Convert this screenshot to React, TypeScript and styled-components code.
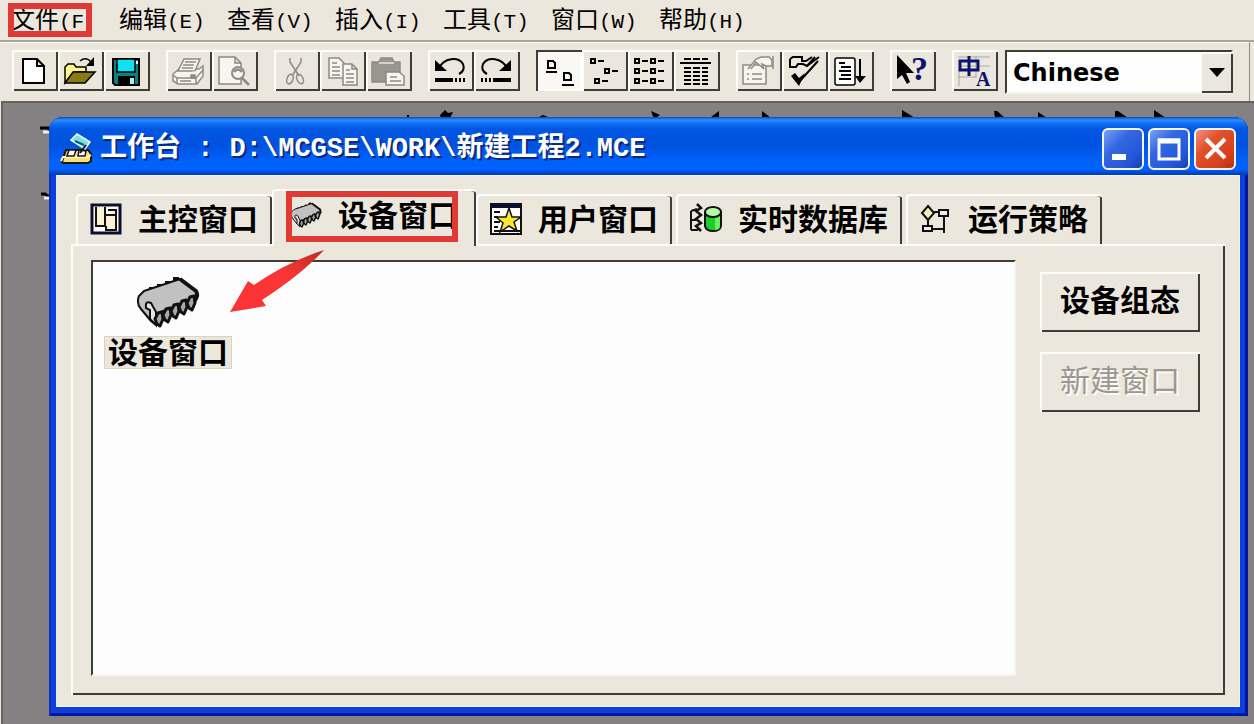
import React, { useState } from "react";
import styled, { createGlobalStyle, css } from "styled-components";

const face = "#ece7dc";
const dark = "#3f3d38";
const red = "#e03a36";
const cjk = '"Noto Sans CJK SC", sans-serif';

const raised = css`
  box-shadow: inset 2px 2px 0 #fdfdf9, inset -2px -2px 0 ${dark};
`;

const GlobalStyle = createGlobalStyle`
  *, *::before, *::after { box-sizing: border-box; }
  body { margin: 0; background: ${face}; color: #000; font-family: ${cjk}; }
  button { margin: 0; padding: 0; border: 0; color: inherit; font: inherit; background: none; }
  svg { display: block; flex: none; }
`;

const Shell = styled.div`
  display: flex;
  flex-direction: column;
  min-height: 100vh;
`;

const MenuBar = styled.nav`
  display: flex;
  gap: 24px;
  height: 42px;
  padding: 3px 11px 0;
  border-bottom: 2px solid #a9a79c;
  background: ${face};
`;

const MenuItem = styled.button`
  position: relative;
  width: 84px;
  height: 34px;
  padding-bottom: 4px;
  font-size: 24px;
  line-height: 30px;
  text-align: left;
  white-space: nowrap;
`;

const Mnemonic = styled.span`
  font-family: "Liberation Mono", monospace;
  font-size: 21px;
`;

const Highlight = styled.span<{ $inset: string }>`
  position: absolute;
  inset: ${(p) => p.$inset};
  border: 6px solid ${red};
  pointer-events: none;
`;

const ToolBar = styled.div`
  display: flex;
  gap: 16px;
  margin-right: 4px;
  padding: 7px 16px 7px 12px;
  border-top: 1px solid #fbfaf5;
  border-right: 1px solid #8b8981;
  background: ${face};
`;

const ToolGroup = styled.div`
  display: flex;
`;

const ToolButton = styled.button<{ $pressed?: boolean }>`
  width: 46px;
  height: 41px;
  ${raised}
  ${(p) =>
    p.$pressed &&
    css`
      background: #faf8f5;
      box-shadow: inset 2px 2px 0 ${dark}, inset -2px -2px 0 #fdfdf9;
    `}
`;

const LanguageGroup = styled.div`
  display: flex;
  flex: 1;
  gap: 7px;
`;

const SelectBox = styled.div`
  position: relative;
  flex: 1;
  height: 44px;
`;

const Select = styled.select`
  appearance: none;
  width: 100%;
  height: 100%;
  padding: 2px 40px 0 6px;
  border: 2px solid ${dark};
  border-right-color: #f6f4ec;
  border-bottom-color: #f6f4ec;
  border-radius: 0;
  background: #fefefe;
  color: #000;
  font: bold 24px "DejaVu Sans", sans-serif;
`;

const SelectArrow = styled.span`
  position: absolute;
  top: 2px;
  right: 0;
  bottom: 1px;
  display: grid;
  place-items: center;
  width: 33px;
  background: ${face};
  pointer-events: none;
  ${raised}
`;

const Workspace = styled.main`
  position: relative;
  display: flex;
  flex: 1;
  margin-left: 1px;
  padding: 14px 6px 8px 46px;
  border-top: 2px solid #67645f;
  border-left: 2px solid #67645f;
  background: #848182;
`;

const Backdrop = styled.svg`
  position: absolute;
  top: 0;
  left: 0;
`;

const Window = styled.section`
  position: relative;
  display: flex;
  flex: 1;
  flex-direction: column;
  min-width: 0;
  padding: 0 8px 9px 7px;
  border-radius: 14px 14px 0 0;
  background: #0b3fe0;
  box-shadow: inset 2px 0 0 #0a2fb0, inset -3px -3px 0 #04179a;
  overflow: hidden;
`;

const TitleBar = styled.header`
  display: flex;
  align-items: center;
  gap: 8px;
  height: 58px;
  margin: 0 -8px 0 -7px;
  padding: 5px 12px 0 11px;
  background: linear-gradient(
    #0a48c8 0,
    #2f8dff 3px,
    #1272f4 6px,
    #0056e2 12px,
    #0052de 28px,
    #0061fb 44px,
    #0063ff 52px,
    #0038b8 58px
  );
`;

const Title = styled.h1`
  flex: 1;
  margin: 0;
  color: #fff;
  font: bold 27px/40px "Liberation Mono", ${cjk};
  text-shadow: 2px 2px 0 #0a2a80;
  white-space: pre;
`;

const Captions = styled.div`
  display: flex;
  gap: 4px;
`;

const Caption = styled.button<{ $close?: boolean }>`
  display: grid;
  place-items: center;
  width: 42px;
  height: 42px;
  border: 2px solid #f4f6ff;
  border-radius: 6px;
  background: ${(p) =>
    p.$close
      ? "linear-gradient(135deg, #f0937c, #e2502c 35%, #d8401c 75%, #b83010)"
      : "linear-gradient(135deg, #7aa2f4, #3468e2 35%, #2456d8 75%, #1840b0)"};
`;

const Client = styled.div`
  display: flex;
  flex: 1;
  flex-direction: column;
  padding: 13px 14px 11px 15px;
  border: 1px solid #f8f6f0;
  border-width: 1px 1px 1px 0;
  background: ${face};
`;

const TabList = styled.div`
  display: flex;
  align-items: flex-end;
  gap: 4px;
  padding-left: 5px;
`;

const Tab = styled.button<{ $active?: boolean }>`
  position: relative;
  display: flex;
  align-items: center;
  gap: 16px;
  height: 50px;
  padding: 0 14px 2px 12px;
  border: 2px solid #fdfdf9;
  border-width: 2px 0 0 2px;
  border-radius: 4px 4px 0 0;
  box-shadow: inset -2px 0 0 ${dark};
  background: ${face};
  font-size: 30px;
  font-weight: 700;
  line-height: 44px;
  white-space: nowrap;
  ${(p) =>
    p.$active &&
    css`
      z-index: 1;
      height: 57px;
      margin: 0 -4px -2px;
      padding: 0 18px 7px 16px;
    `}
`;

const TabLabel = styled.span`
  padding-bottom: 4px;
  line-height: 40px;
`;

const Panel = styled.div`
  display: flex;
  flex: 1;
  gap: 24px;
  padding: 16px 25px 19px 20px;
  ${raised}
`;

const ListBox = styled.div`
  position: relative;
  flex: 1;
  min-width: 0;
  padding: 14px 11px;
  border: 2px solid ${dark};
  border-right-color: #f7f5f0;
  border-bottom-color: #f7f5f0;
  background: #fdfdfd;
`;

const ListItem = styled.button`
  display: flex;
  flex-direction: column;
  align-items: center;
  gap: 8px;
`;

const ListLabel = styled.span`
  padding: 0 3px 4px;
  border: 1px solid #d9d5b8;
  background: ${face};
  font-size: 30px;
  font-weight: 700;
  line-height: 27px;
`;

const Pointer = styled.svg`
  position: absolute;
  top: -15px;
  left: 134px;
`;

const Actions = styled.div`
  display: flex;
  flex-direction: column;
  gap: 20px;
  padding-top: 12px;
`;

const Action = styled.button`
  width: 160px;
  height: 60px;
  padding-bottom: 8px;
  font-size: 30px;
  font-weight: 700;
  line-height: 44px;
  ${raised}
  &:disabled {
    color: #9a9890;
    font-weight: 400;
    text-shadow: 2px 2px 0 #fbfaf4;
  }
`;

const Glyph = ({ children }: { children: React.ReactNode }) => (
  <svg width="46" height="41" viewBox="0 0 46 41" fill="none" stroke="#000" strokeWidth="2" aria-hidden="true">
    {children}
  </svg>
);

const gray = { stroke: "#8d8b84", strokeWidth: 1.5, fill: "#f7f5ee" };

const UndoShape = () => (
  <>
    <path d="M11 18C16 8 30 6 35 14C37 19 35 22 31 24" />
    <path d="M7 10V21H19Z" fill="#000" stroke="none" />
    <path d="M7 30H25M27 30h2M31 30h2M35 30h2" strokeWidth="4" />
  </>
);

const SmallItem = ({ x, y }: { x: number; y: number }) => (
  <path d={`M${x} ${y}h4v4h-4zM${x + 7} ${y + 2}h6`} />
);

type Tool = { label: string; glyph: React.ReactNode; pressed?: boolean; disabled?: boolean };

const toolGroups: Tool[][] = [
  [
    {
      label: "新建",
      glyph: <path d="M11 9H25L32 16V33H11ZM25 9V16H32" fill="#fff" />,
    },
    {
      label: "打开",
      glyph: (
        <>
          <path d="M7 33V17L10 14H16L18 17H28V22H16Z" fill="#fff68a" strokeWidth="1.5" />
          <path d="M7 33L15 22H37L27 33Z" fill="#8a7a10" strokeWidth="1.5" />
          <path d="M22 11Q28 6 33 12" strokeWidth="1.5" />
          <path d="M36 7V16H28Z" fill="#000" stroke="none" />
        </>
      ),
    },
    {
      label: "保存",
      glyph: (
        <>
          <path d="M9 9H35V35H11L9 33Z" fill="#0c7f80" />
          <path d="M13 9H31V22H13Z" fill="#10e0f0" strokeWidth="1.5" />
          <path d="M14 26H31V35H14Z" fill="#000" stroke="none" />
          <path d="M26 28H30V34H26Z" fill="#a8f0f0" stroke="none" />
          <path d="M33 11v3" stroke="#fff" />
        </>
      ),
    },
  ],
  [
    {
      label: "打印",
      disabled: true,
      glyph: (
        <g {...gray}>
          <path d="M7 24L13 19H33L37 16V26L31 34H12L7 31Z" />
          <path d="M12 21L18 9H34L29 21Z" />
          <path d="M19 12H30M17 15H28M16 18H27M7 25L11 28H30L37 20M11 28V34M30 28V34M14 31H25" />
          <path d="M25 25h4v3h-4z" fill="#8d8b84" />
        </g>
      ),
    },
    {
      label: "打印预览",
      disabled: true,
      glyph: (
        <g {...gray}>
          <path d="M7 7H23L29 13V34H7ZM23 7V13H29" />
          <circle cx="26" cy="23" r="6" strokeWidth="2" />
          <path d="M22 22Q26 17 30 22M30 28L37 35" strokeWidth="2.5" fill="none" />
        </g>
      ),
    },
  ],
  [
    {
      label: "剪切",
      disabled: true,
      glyph: (
        <g {...gray} fill="none">
          <path d="M16 8V12L25 26M27 8V12L18 26" />
          <ellipse cx="16" cy="29" rx="3" ry="5" transform="rotate(20 16 29)" />
          <ellipse cx="26" cy="29" rx="3" ry="5" transform="rotate(-25 26 29)" />
        </g>
      ),
    },
    {
      label: "复制",
      disabled: true,
      glyph: (
        <g {...gray}>
          <path d="M9 8H19L24 13V28H9ZM12 13H17M12 17H20M12 21H20M12 25H20" />
          <path d="M23 14H32L37 19V35H23ZM32 14V19H37M26 20H30M26 24H34M26 28H34M26 32H34" />
        </g>
      ),
    },
    {
      label: "粘贴",
      disabled: true,
      glyph: (
        <g {...gray}>
          <path d="M6 12H13L15 8H26L28 12H34V32H6Z" fill="#98968f" />
          <path d="M13 13H28" stroke="#e8e6de" />
          <path d="M20 22H33L38 26V35H20ZM24 27H31M24 31H35" />
        </g>
      ),
    },
  ],
  [
    { label: "撤消", glyph: <UndoShape /> },
    {
      label: "重复",
      glyph: (
        <g transform="translate(44 0) scale(-1 1)">
          <UndoShape />
        </g>
      ),
    },
  ],
  [
    {
      label: "大图标",
      pressed: true,
      glyph: <path d="M12 11H17L19 13V18H12ZM10 22H21M28 23H33L35 25V30H28ZM26 35H38" />,
    },
    {
      label: "小图标",
      glyph: (
        <>
          <SmallItem x={9} y={9} />
          <SmallItem x={23} y={19} />
          <SmallItem x={13} y={29} />
        </>
      ),
    },
    {
      label: "列表",
      glyph: (
        <>
          {[9, 19, 29].map((y) => (
            <React.Fragment key={y}>
              <SmallItem x={7} y={y} />
              <SmallItem x={23} y={y} />
            </React.Fragment>
          ))}
        </>
      ),
    },
    {
      label: "详细资料",
      glyph: (
        <>
          <path d="M10 9H34" strokeDasharray="7 2" />
          <path d="M6 13H37" />
          <path d="M10 18H34M10 22H34M10 26H34M10 30H34M10 34H34" strokeDasharray="7 2" />
        </>
      ),
    },
  ],
  [
    {
      label: "属性",
      disabled: true,
      glyph: (
        <g {...gray}>
          <path d="M7 15H30V34H7ZM11 24H13M16 24H26M11 29H13M16 29H26" />
          <path d="M12 19L20 9L25 7H33L36 10V16H30L26 14L28 19L20 12L15 19" />
          <path d="M37 6V19" />
        </g>
      ),
    },
    {
      label: "检查",
      glyph: (
        <>
          <path d="M8 9L11 7H20V11H24L30 7M8 9V17H14L16 14H21L25 16L33 7M25 16L37 7" fill="none" />
          <path d="M11 26L17 32L36 11" strokeWidth="2" />
          <path d="M9 26L13 23L17 28L23 23L17 36Z" fill="#000" stroke="none" />
        </>
      ),
    },
    {
      label: "排序",
      glyph: (
        <>
          <rect x="7" y="8" width="20" height="27" rx="2" fill="#fff" strokeWidth="1.5" />
          <path d="M11 13H17M13 17H23M11 21H23M13 25H23M11 29H23M32 9V30" />
          <path d="M27 26H38L32 33Z" fill="#000" stroke="none" />
        </>
      ),
    },
  ],
  [
    {
      label: "帮助",
      glyph: (
        <>
          <path d="M7 5V29L12 25L17 34L20 32L16 23H24Z" fill="#000" stroke="none" />
          <text x="21" y="30" fill="#0a1470" stroke="none" fontSize="34" fontWeight="700" fontFamily="Liberation Serif, serif">
            ?
          </text>
        </>
      ),
    },
  ],
];

const ToolItem = ({ tool }: { tool: Tool }) => (
  <ToolButton type="button" aria-label={tool.label} aria-pressed={tool.pressed} disabled={tool.disabled} $pressed={tool.pressed}>
    <Glyph>{tool.glyph}</Glyph>
  </ToolButton>
);

const languageTool: Tool = {
  label: "语言",
  glyph: (
    <>
      <path d="M6 7H38M6 27H24M7 16H38M7 20V36M24 6V28" stroke="#aaa89e" strokeWidth="1" />
      <path d="M8 11H26V20H8ZM17 6V26" stroke="#0a1470" strokeWidth="3" />
      <text x="24" y="36" fill="#0a1470" stroke="none" fontSize="20" fontWeight="700" fontFamily="Liberation Serif, serif">
        A
      </text>
    </>
  ),
};

const Chip = ({ size, height }: { size: number; height: number }) => (
  <svg width={size} height={height} viewBox="0 0 64 52" aria-hidden="true">
    <path
      d="M14 15v-3h3v2M22 12v-3h3v2M30 9v-3h3v2M38 6v-4h4v2"
      fill="#222"
      stroke="#111"
      strokeWidth="2"
    />
    <path
      d="M20 37V49L15 45L5 33Q0 27 3 20L8 15L44 3L60 15Q63 20 59 26L56 24L22 37Z"
      fill="#c1c1c1"
      stroke="#111"
      strokeWidth="2"
      strokeLinejoin="round"
    />
    <path d="M44 3L60 15Q63 20 58 25" fill="none" stroke="#111" strokeWidth="4" />
    <path d="M10 32Q9 24 15 27L20 36V49L14 43L14 34Z" fill="#e4e4e4" stroke="#111" strokeWidth="2" />
    {[22, 30, 38, 46, 54].map((x, i) => (
      <path
        key={x}
        d={`M${x} ${37 - i * 4}l4-1l1 7l-3 7l-3-2l-2-5z`}
        fill="#a8a8a8"
        stroke="#111"
        strokeWidth="3"
        strokeLinejoin="round"
      />
    ))}
  </svg>
);

const TabIcon = ({ children }: { children: React.ReactNode }) => (
  <svg width="32" height="32" viewBox="0 0 32 32" fill="none" stroke="#111" strokeWidth="2" aria-hidden="true">
    {children}
  </svg>
);

const tabs = [
  {
    label: "主控窗口",
    icon: (
      <TabIcon>
        <rect x="2" y="2" width="28" height="28" fill="#fdfbf5" stroke="#0b1030" strokeWidth="3" />
        <path d="M6 4V23H15V4M15 12H19L26 12V27H16V23M18 7H26V12" fill="#fbf2d2" />
      </TabIcon>
    ),
  },
  { label: "设备窗口", icon: <Chip size={32} height={28} /> },
  {
    label: "用户窗口",
    icon: (
      <TabIcon>
        <rect x="1" y="1" width="30" height="30" fill="#fff" />
        <path d="M1 3H31" stroke="#0b1030" strokeWidth="4" />
        <path d="M4 9H10M4 14H8M4 19H10M4 24H8M4 28H30" strokeWidth="2" />
        <path d="M19 5L22 14H31L24 19L27 28L19 23L10 29L13 20L6 14H16Z" fill="#ffe62e" strokeWidth="1.5" />
      </TabIcon>
    ),
  },
  {
    label: "实时数据库",
    icon: (
      <TabIcon>
        <path d="M1 8V27M1 8L7 6M1 17H6M1 27H8" />
        <path d="M7 1L11 5L6 8L11 12L6 16L11 20L6 23L11 28" strokeWidth="2.5" />
        <path d="M15 9V23Q16 28 23 28Q30 28 31 23V9Z" fill="#18d028" />
        <path d="M25 11V27Q30 27 30 23V11Z" fill="#66f060" stroke="none" />
        <ellipse cx="23" cy="9" rx="8" ry="5" fill="#b4f7a8" />
      </TabIcon>
    ),
  },
  {
    label: "运行策略",
    icon: (
      <TabIcon>
        <path d="M8 3L14 10L8 17L2 10Z" fill="#f4f1b8" />
        <path d="M14 9H19M24 13V30M8 17V23M12 26H24" />
        <rect x="19" y="7" width="9" height="6" fill="#eee" />
        <rect x="3" y="23" width="9" height="5" fill="#eee" />
      </TabIcon>
    ),
  },
];

const menus = [
  ["编辑", "(E)"],
  ["查看", "(V)"],
  ["插入", "(I)"],
  ["工具", "(T)"],
  ["窗口", "(W)"],
  ["帮助", "(H)"],
];

export default function App() {
  const [language, setLanguage] = useState("Chinese");

  return (
    <>
      <GlobalStyle />
      <Shell>
        <MenuBar aria-label="菜单">
          <MenuItem type="button">
            文件<Mnemonic>(F</Mnemonic>
            <Highlight $inset="0 3px 0 -3px" />
          </MenuItem>
          {menus.map(([name, key]) => (
            <MenuItem type="button" key={name}>
              {name}
              <Mnemonic>{key}</Mnemonic>
            </MenuItem>
          ))}
        </MenuBar>

        <ToolBar role="toolbar" aria-label="工具条">
          {toolGroups.map((group) => (
            <ToolGroup key={group[0].label}>
              {group.map((tool) => (
                <ToolItem key={tool.label} tool={tool} />
              ))}
            </ToolGroup>
          ))}
          <LanguageGroup>
            <ToolItem tool={languageTool} />
            <SelectBox>
              <Select aria-label="语言" value={language} onChange={(e) => setLanguage(e.target.value)}>
                <option>Chinese</option>
              </Select>
              <SelectArrow>
                <svg width="16" height="9" viewBox="0 0 16 9" aria-hidden="true">
                  <path d="M0 0H16L8 9Z" />
                </svg>
              </SelectArrow>
            </SelectBox>
          </LanguageGroup>
        </ToolBar>

        <Workspace>
          <Backdrop width="1240" height="110" viewBox="0 0 1240 110" aria-hidden="true">
            <path d="M437 12l5-5l3 3l5-1l-3 6h-9zM536 14l4-2l5 2zM648 8l9 4l-6 4zM708 14l8-6v7zM759 8l9 7h-9zM899 7l13 8h-13zM991 8h3l8 7h-10zM1035 9l9 6h-9zM1112 8h3l10 7h-13zM1151 7l12 8h-12zM404 12h2v3h-2z" />
            <path d="M37 25h9v3M38 91h4l4 3" fill="none" stroke="#000" strokeWidth="3" />
            <path d="M40 29h6M41 95h5" stroke="#eee" strokeWidth="3" />
          </Backdrop>

          <Window aria-label="工作台">
            <TitleBar>
              <svg width="32" height="32" viewBox="0 0 32 32" aria-hidden="true">
                <path d="M2 29L6 17H28L31 21V28L28 30H3Z" fill="#f5e27a" stroke="#181818" strokeWidth="2" />
                <path d="M1 28L3 24H28L31 22" fill="none" stroke="#fff8c8" strokeWidth="2" />
                <path d="M9 17L7 23H14L16 17ZM19 17L18 23H25L26 18Z" fill="#fff" stroke="#181818" strokeWidth="1.5" />
                <path d="M11 7L17 1L30 9L25 16Z" fill="#7fe0e4" stroke="#effcff" strokeWidth="1.5" />
                <path d="M15 8L24 12" stroke="#0b5a80" strokeWidth="2" />
                <path d="M26 12L20 20" stroke="#181818" strokeWidth="2" />
              </svg>
              <Title>{"工作台 : D:\\MCGSE\\WORK\\新建工程2.MCE"}</Title>
              <Captions>
                <Caption type="button" aria-label="最小化">
                  <svg width="38" height="38" viewBox="0 0 38 38" aria-hidden="true">
                    <path d="M8 24H22V30H8Z" fill="#fff" />
                  </svg>
                </Caption>
                <Caption type="button" aria-label="最大化">
                  <svg width="38" height="38" viewBox="0 0 38 38" fill="none" stroke="#fff" aria-hidden="true">
                    <path d="M9 10H29V29H9Z" strokeWidth="3" />
                    <path d="M8 11H30" strokeWidth="5" />
                  </svg>
                </Caption>
                <Caption type="button" aria-label="关闭" $close>
                  <svg width="38" height="38" viewBox="0 0 38 38" fill="none" stroke="#fff" aria-hidden="true">
                    <path d="M10 9L29 28M29 9L10 28" strokeWidth="4" />
                  </svg>
                </Caption>
              </Captions>
            </TitleBar>

            <Client>
              <TabList role="tablist">
                {tabs.map((tab, index) => (
                  <Tab type="button" role="tab" key={tab.label} aria-selected={index === 1} $active={index === 1}>
                    {tab.icon}
                    <TabLabel>{tab.label}</TabLabel>
                    {index === 1 && <Highlight $inset="0 18px 4px 12px" />}
                  </Tab>
                ))}
              </TabList>
              <Panel role="tabpanel">
                <ListBox>
                  <ListItem type="button">
                    <Chip size={64} height={52} />
                    <ListLabel>设备窗口</ListLabel>
                  </ListItem>
                  <Pointer width="100" height="70" viewBox="0 0 100 70" aria-hidden="true">
                    <defs>
                      <linearGradient id="pointer-red" x1="0" y1="1" x2="1" y2="0">
                        <stop offset="0.6" stopColor="#fb3536" />
                        <stop offset="1" stopColor="#b82c28" />
                      </linearGradient>
                    </defs>
                    <path d="M3 65L21 34L27 38Q60 15 97 3Q75 27 35 53L39 59Z" fill="url(#pointer-red)" />
                  </Pointer>
                </ListBox>
                <Actions>
                  <Action type="button">设备组态</Action>
                  <Action type="button" disabled>
                    新建窗口
                  </Action>
                </Actions>
              </Panel>
            </Client>
          </Window>
        </Workspace>
      </Shell>
    </>
  );
}
